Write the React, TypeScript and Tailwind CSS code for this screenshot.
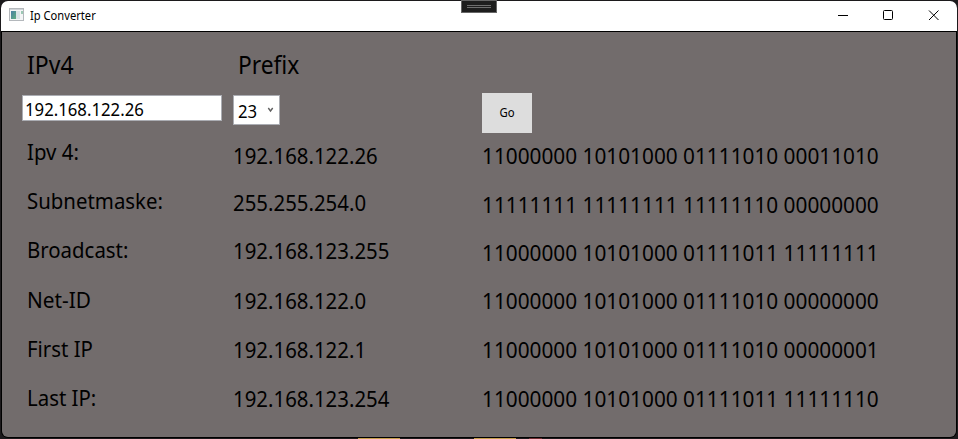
type Row = { text: string; h: string; wide?: boolean };

const labels: Row[] = [
  { text: "Ipv 4:", h: "h-[49px]" },
  { text: "Subnetmaske:", h: "h-[49px]" },
  { text: "Broadcast:", h: "h-[50px]" },
  { text: "Net-ID", h: "h-[49px]", wide: true },
  { text: "First IP", h: "h-[49px]" },
  { text: "Last IP:", h: "h-[30px]" },
];
const addresses: Row[] = [
  { text: "192.168.122.26", h: "h-[47px]" },
  { text: "255.255.254.0", h: "h-[48px]" },
  { text: "192.168.123.255", h: "h-[50px]" },
  { text: "192.168.122.0", h: "h-[49px]" },
  { text: "192.168.122.1", h: "h-[49px]" },
  { text: "192.168.123.254", h: "h-[30px]" },
];
const bits: Row[] = [
  { text: "11000000 10101000 01111010 00011010", h: "h-[49px]", wide: true },
  { text: "11111111 11111111 11111110 00000000", h: "h-[48px]", wide: true },
  { text: "11000000 10101000 01111011 11111111", h: "h-[48px]", wide: true },
  { text: "11000000 10101000 01111010 00000000", h: "h-[49px]", wide: true },
  { text: "11000000 10101000 01111010 00000001", h: "h-[49px]", wide: true },
  { text: "11000000 10101000 01111011 11111110", h: "h-[30px]", wide: true },
];

function Column({ rows, className }: { rows: Row[]; className: string }) {
  return (
    <div className={`flex flex-col items-start text-[22px] leading-[30px] ${className}`}>
      {rows.map((r) => (
        <div key={r.text} className={r.h}>
          <span className={`inline-block origin-left ${r.wide ? "scale-x-[0.945]" : "scale-x-[0.927]"}`}>{r.text}</span>
        </div>
      ))}
    </div>
  );
}

function TitleBar() {
  return (
    <header className="flex h-[30px] items-start bg-white">
      <svg className="mt-[7px] ml-2 shrink-0" width="15" height="13" viewBox="0 0 15 13">
        <defs>
          <linearGradient id="pane" x1="0" y1="0" x2="1" y2="1">
            <stop offset="0" stopColor="#4a7fa5" />
            <stop offset="1" stopColor="#5fae80" />
          </linearGradient>
        </defs>
        <rect x="0.5" y="0.5" width="14" height="12" fill="#f4f5f6" stroke="#b4b8bc" />
        <rect x="1" y="1" width="13" height="1" fill="#d0d4d8" />
        <rect x="2" y="3" width="5" height="8" fill="url(#pane)" />
        <rect x="7" y="3" width="4" height="8" fill="#d9e3e6" />
        <rect x="12" y="3" width="2" height="3" fill="#9cc8b4" />
      </svg>
      <span className="mt-[6px] ml-[6px] inline-block origin-left scale-x-[0.93] text-[12px] leading-[18px] whitespace-nowrap">
        Ip Converter
      </span>
      <svg className="ml-auto shrink-0" width="120" height="30" viewBox="0 0 120 30" fill="none" stroke="#000">
        <path d="M1 14.5h10" />
        <rect x="46.5" y="9.5" width="9" height="9" rx="1" />
        <path d="M92 9.500l9.500 9.500M101.500 9.500l-9.500 9.500" />
      </svg>
    </header>
  );
}

export default function App() {
  return (
    <div className="relative h-[439px] w-[958px] overflow-hidden bg-[#1c1a1c] font-['Noto_Sans','Open_Sans',sans-serif] text-black">
      <div className="flex h-full flex-col p-px">
        <div className="flex h-[437px] flex-col overflow-hidden rounded-[7px] bg-black">
          <TitleBar />
          <main className="m-px flex h-[405px] flex-col rounded-b-[6px] bg-[#726c6c]">
            <div className="flex h-[63px] pt-[15px] text-[25px] leading-[34px]">
              <div className="w-[211px] pl-[25px]">
                <span className="inline-block origin-left scale-x-[0.92]">IPv4</span>
              </div>
              <div className="pl-[25px]">
                <span className="inline-block origin-left scale-x-[0.91]">Prefix</span>
              </div>
            </div>
            <div className="flex h-[45px] items-start pl-[20px] text-[18px]">
              <div className="h-[26px] w-[200px] border border-[#abadb3] bg-white pl-[2px] leading-[27px]">
                <span className="inline-block origin-left scale-x-[0.93]">192.168.122.26</span>
              </div>
              <div className="ml-[11px] flex h-[30px] w-[47px] border border-[#abadb3] bg-white pl-[4px] leading-[31px]">
                <span className="inline-block origin-left scale-x-[0.93]">23</span>
                <svg className="mt-[11px] ml-[8px]" width="7" height="6" viewBox="0 0 7 6" fill="none" stroke="#606060" strokeWidth="1.4">
                  <path d="M1.300 1l2.200 3 2.200-3" />
                </svg>
              </div>
              <div className="-mt-[2px] ml-[202px] flex h-[40px] w-[50px] items-center justify-center bg-[#dddddd] text-[12px] leading-4">
                <span className="inline-block scale-x-[0.945]">Go</span>
              </div>
            </div>
            <div className="flex">
              <Column rows={labels} className="w-[206px] -mt-[4px] pl-[25px]" />
              <Column rows={addresses} className="w-[274px] pl-[25px]" />
              <Column rows={bits} className="whitespace-nowrap" />
            </div>
          </main>
        </div>
      </div>
      <div className="absolute top-0 left-[461px] flex h-[13px] w-[36px] flex-col items-center justify-center gap-px border border-[#666666] bg-[#1e1e1e]">
        <div className="h-px w-6 bg-[#6e6e6e]" />
        <div className="h-px w-6 bg-[#6e6e6e]" />
      </div>
      <div className="absolute bottom-0 left-[358px] flex h-px">
        <div className="w-[42px] bg-[#c8a04c]" />
        <div className="ml-[74px] w-[42px] bg-[#c8a04c]" />
        <div className="ml-[13px] w-[13px] bg-[#702c30]" />
      </div>
    </div>
  );
}
